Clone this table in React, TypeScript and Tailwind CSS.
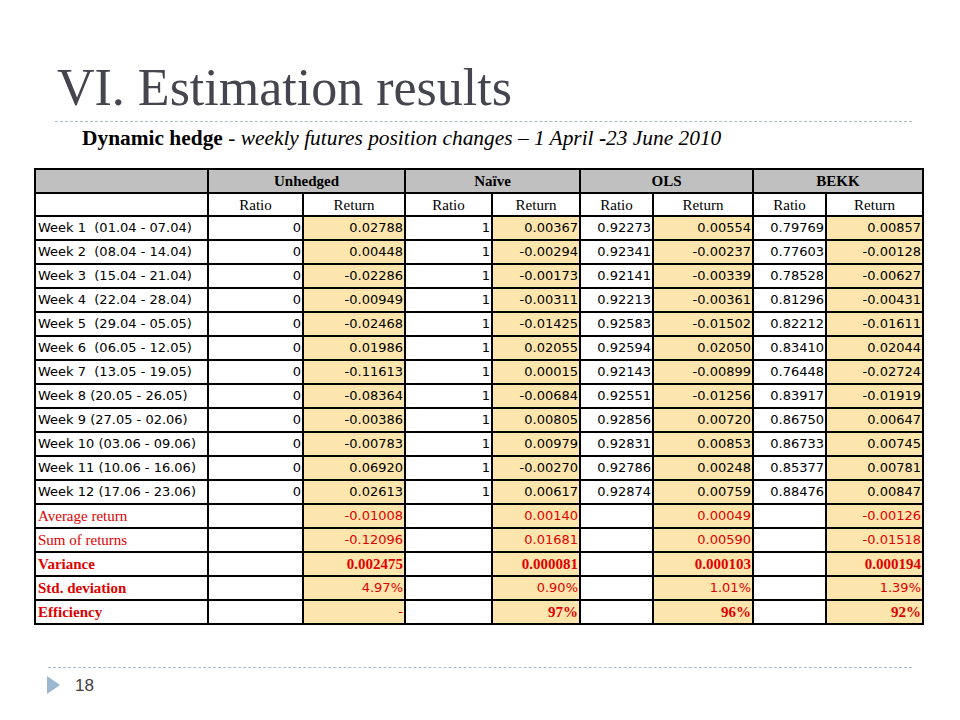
const weeks: [string, string[]][] = [
  ["Week 1  (01.04 - 07.04)", ["0", "0.02788", "1", "0.00367", "0.92273", "0.00554", "0.79769", "0.00857"]],
  ["Week 2  (08.04 - 14.04)", ["0", "0.00448", "1", "-0.00294", "0.92341", "-0.00237", "0.77603", "-0.00128"]],
  ["Week 3  (15.04 - 21.04)", ["0", "-0.02286", "1", "-0.00173", "0.92141", "-0.00339", "0.78528", "-0.00627"]],
  ["Week 4  (22.04 - 28.04)", ["0", "-0.00949", "1", "-0.00311", "0.92213", "-0.00361", "0.81296", "-0.00431"]],
  ["Week 5  (29.04 - 05.05)", ["0", "-0.02468", "1", "-0.01425", "0.92583", "-0.01502", "0.82212", "-0.01611"]],
  ["Week 6  (06.05 - 12.05)", ["0", "0.01986", "1", "0.02055", "0.92594", "0.02050", "0.83410", "0.02044"]],
  ["Week 7  (13.05 - 19.05)", ["0", "-0.11613", "1", "0.00015", "0.92143", "-0.00899", "0.76448", "-0.02724"]],
  ["Week 8 (20.05 - 26.05)", ["0", "-0.08364", "1", "-0.00684", "0.92551", "-0.01256", "0.83917", "-0.01919"]],
  ["Week 9 (27.05 - 02.06)", ["0", "-0.00386", "1", "0.00805", "0.92856", "0.00720", "0.86750", "0.00647"]],
  ["Week 10 (03.06 - 09.06)", ["0", "-0.00783", "1", "0.00979", "0.92831", "0.00853", "0.86733", "0.00745"]],
  ["Week 11 (10.06 - 16.06)", ["0", "0.06920", "1", "-0.00270", "0.92786", "0.00248", "0.85377", "0.00781"]],
  ["Week 12 (17.06 - 23.06)", ["0", "0.02613", "1", "0.00617", "0.92874", "0.00759", "0.88476", "0.00847"]],
];

const summary = [
  { label: "Average return", bold: false, serif: false, values: ["-0.01008", "0.00140", "0.00049", "-0.00126"] },
  { label: "Sum of returns", bold: false, serif: false, values: ["-0.12096", "0.01681", "0.00590", "-0.01518"] },
  { label: "Variance", bold: true, serif: true, values: ["0.002475", "0.000081", "0.000103", "0.000194"] },
  { label: "Std. deviation", bold: true, serif: false, values: ["4.97%", "0.90%", "1.01%", "1.39%"] },
  { label: "Efficiency", bold: true, serif: true, values: ["-", "97%", "96%", "92%"] },
];

const groups = ["Unhedged", "Naïve", "OLS", "BEKK"];

const sans = "font-['DejaVu_Sans',sans-serif] text-[13px]";
const serif = "font-['Liberation_Serif',serif] text-[15px]";

export default function App() {
  return (
    <div className="w-[960px] h-[720px] bg-white flex flex-col overflow-hidden">
      <h1 className="ml-[57px] mt-[62px] text-[52px] leading-none text-[#45454f] font-['Liberation_Serif',serif] whitespace-nowrap">
        VI. Estimation results
      </h1>
      <div className="ml-[55px] mt-[7px] w-[857px] border-t border-dashed border-[#a9bfcf]" />

      <p className="ml-[82px] mt-[6px] text-[21.4px] leading-none text-black font-['Liberation_Serif',serif] whitespace-nowrap">
        <span className="font-bold">Dynamic hedge</span>
        <span className="italic"> - weekly futures position changes – 1 April </span>
        <span className="font-bold">-</span>
        <span className="italic">23 June 2010</span>
      </p>

      <div className="ml-[34px] mt-[19px] w-fit grid grid-cols-[171px_93px_100px_85px_86px_71px_98px_71px_95px] grid-rows-[22px_21px] auto-rows-[22px] gap-[2px] bg-black p-[2px] leading-[22px]">
        {/* header */}
        <div className="bg-[#c0c0c0]" />
        {groups.map((g) => (
          <div key={g} className={`col-span-2 bg-[#c0c0c0] text-center font-bold ${serif}`}>
            {g}
          </div>
        ))}
        <div className="bg-white" />
        {groups.map((g) => (
          <div key={g + "-sub"} className="contents">
            <div className={`bg-white text-center ${serif}`}>Ratio</div>
            <div className={`bg-white text-center ${serif}`}>Return</div>
          </div>
        ))}

        {/* weekly rows */}
        {weeks.map(([label, vals]) => (
          <div key={label} className="contents">
            <div className={`bg-white pl-[2px] whitespace-pre text-black ${sans}`}>{label}</div>
            {vals.map((v, i) => (
              <div
                key={i}
                className={`${i % 2 ? "bg-[#fce6ae]" : "bg-white"} text-right pr-[1px] text-black ${sans}`}
              >
                {v}
              </div>
            ))}
          </div>
        ))}

        {/* summary rows */}
        {summary.map((row) => (
          <div key={row.label} className="contents">
            <div className={`bg-white pl-[2px] text-[#e00000] ${serif} ${row.bold ? "font-bold" : ""}`}>
              {row.label}
            </div>
            {row.values.map((v, i) => (
              <div key={i} className="contents">
                <div className="bg-white" />
                <div
                  className={`bg-[#fce6ae] text-right pr-[1px] text-[#e00000] ${
                    row.serif && v !== "-" ? `${serif} font-bold` : sans
                  }`}
                >
                  {v}
                </div>
              </div>
            ))}
          </div>
        ))}
      </div>

      <div className="ml-[48px] mt-[42px] w-[864px] border-t border-dashed border-[#a9bfcf]" />
      <div className="ml-[47px] mt-[8px] flex items-center">
        <svg width="13" height="18" viewBox="0 0 13 18">
          <polygon points="0,0 13,9 0,18" fill="#9bb7d1" />
        </svg>
        <span className="ml-[15px] text-[17px] leading-none text-[#404040] font-['Liberation_Sans',sans-serif]">18</span>
      </div>
    </div>
  );
}
